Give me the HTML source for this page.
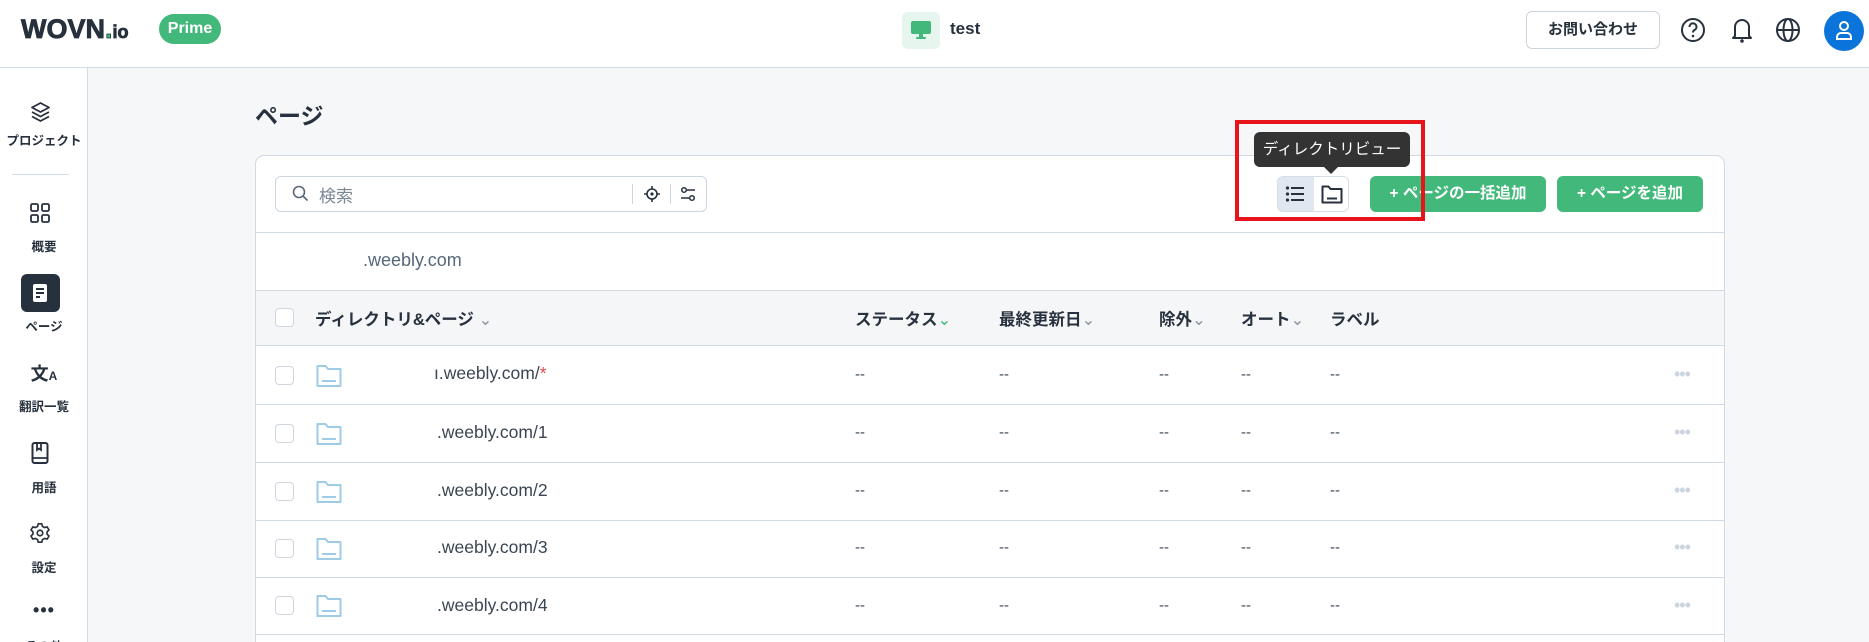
<!DOCTYPE html>
<html style="overflow:hidden;width:1869px;height:642px"><head><meta charset="utf-8"><style>
*{box-sizing:border-box;margin:0;padding:0}
body{width:1869px;height:642px;overflow:hidden;background:#f6f7f9;font-family:"Liberation Sans","Noto Sans CJK JP",sans-serif;color:#27313d;position:relative}
.a{position:absolute}
.hdr{left:0;top:0;width:1869px;height:68px;background:#fff;border-bottom:1px solid #d3dbe5}
.side{left:0;top:68px;width:88px;height:574px;background:#fff;border-right:1px solid #d3dbe5}
.lbl{width:88px;text-align:center;font-size:12.5px;font-weight:bold;color:#27313d}
.card{left:255px;top:155px;width:1470px;height:500px;background:#fff;border:1px solid #d0d9e4;border-radius:9px}
.hl{height:1px;background:#d0d9e4;left:256px;width:1468px}
.cb{width:19px;height:19px;border:1.5px solid #d0d6de;border-radius:4px;background:#fff}
.th{font-size:16.5px;font-weight:bold;color:#27313d;top:306px}
.dd{font-size:15px;color:#3a4654}
.url{font-size:17.5px;color:#3a4654}
.btn{top:176px;height:36px;background:#42b87a;border-radius:6px;color:#fff;font-weight:bold;font-size:15.5px;text-align:center;line-height:36px}
.dots{color:#cdd5de;font-size:18px;letter-spacing:-1px}
</style></head><body>
<div class="a hdr"></div>
<div class="a" style="left:21px;top:14px;font-size:27px;font-weight:bold;letter-spacing:0px;color:#27313d;-webkit-text-stroke:0.8px #27313d">WOVN<span style="color:#42b87a">.</span><span style="font-size:18px">io</span></div>
<div class="a" style="left:159px;top:14px;width:62px;height:30px;border-radius:15px;background:#42b87a;color:#fff;font-weight:bold;font-size:16px;text-align:center;line-height:30px">Prime</div>
<div class="a" style="left:902px;top:12px;width:38px;height:37px;border-radius:6px;background:#e6f5ed"></div>
<svg class="a" style="left:910px;top:20px" width="22" height="20" viewBox="0 0 22 20"><rect x="1" y="1" width="20" height="13" rx="2" fill="#42b87a"/><rect x="9" y="14" width="4" height="3" fill="#42b87a"/><rect x="6" y="17" width="10" height="2" rx="1" fill="#42b87a"/></svg>
<div class="a" style="left:950px;top:19px;font-size:17px;font-weight:bold">test</div>
<div class="a" style="left:1526px;top:11px;width:134px;height:38px;border:1px solid #ccd4de;border-radius:6px;text-align:center;line-height:36px;font-size:15px;font-weight:bold">お問い合わせ</div>
<svg class="a" style="left:1680px;top:17px" width="26" height="26" viewBox="0 0 26 26"><circle cx="13" cy="13" r="11" fill="none" stroke="#27313d" stroke-width="2"/><path d="M9.5 10a3.5 3.5 0 1 1 5 3c-1.2.7-1.5 1.3-1.5 2.5" fill="none" stroke="#27313d" stroke-width="2"/><circle cx="13" cy="19" r="1.3" fill="#27313d"/></svg>
<svg class="a" style="left:1730px;top:16px" width="24" height="28" viewBox="0 0 24 28"><path d="M5 20V11a7 7 0 0 1 14 0v9l2 2H3z" fill="none" stroke="#27313d" stroke-width="2" stroke-linejoin="round"/><circle cx="12" cy="25" r="1.8" fill="#27313d"/></svg>
<svg class="a" style="left:1775px;top:17px" width="26" height="26" viewBox="0 0 26 26"><circle cx="13" cy="13" r="11" fill="none" stroke="#27313d" stroke-width="2"/><ellipse cx="13" cy="13" rx="4.5" ry="11" fill="none" stroke="#27313d" stroke-width="2"/><path d="M2 13h22" stroke="#27313d" stroke-width="2"/></svg>
<div class="a" style="left:1824px;top:11px;width:40px;height:40px;border-radius:50%;background:#0a74da"></div>
<svg class="a" style="left:1834px;top:20px" width="20" height="22" viewBox="0 0 20 22"><circle cx="10" cy="6" r="4" fill="none" stroke="#fff" stroke-width="2"/><path d="M3 19v-2a4 4 0 0 1 4-4h6a4 4 0 0 1 4 4v2z" fill="none" stroke="#fff" stroke-width="2"/></svg>

<div class="a side"></div>
<svg class="a" style="left:30px;top:101px" width="21" height="22" viewBox="0 0 21 22"><path d="M10.5 2L19 6.5 10.5 11 2 6.5z" fill="none" stroke="#27313d" stroke-width="1.8" stroke-linejoin="round"/><path d="M2 11l8.5 4.5L19 11M2 15.5l8.5 4.5 8.5-4.5" fill="none" stroke="#27313d" stroke-width="1.8" stroke-linejoin="round"/></svg>
<div class="a lbl" style="top:130px;left:0">プロジェクト</div>
<div class="a" style="left:12px;top:174px;width:57px;height:1px;background:#d3dbe5"></div>
<svg class="a" style="left:30px;top:203px" width="20" height="20" viewBox="0 0 20 20"><g fill="none" stroke="#27313d" stroke-width="1.8"><rect x="1" y="1" width="7" height="7" rx="1.5"/><rect x="12" y="1" width="7" height="7" rx="1.5"/><rect x="1" y="12" width="7" height="7" rx="1.5"/><rect x="12" y="12" width="7" height="7" rx="1.5"/></g></svg>
<div class="a lbl" style="top:236px;left:0">概要</div>
<div class="a" style="left:21px;top:274px;width:39px;height:38px;border-radius:6px;background:#27313d"></div>
<svg class="a" style="left:32px;top:283px" width="16" height="20" viewBox="0 0 16 20"><rect x="1" y="1" width="14" height="18" rx="2" fill="#fff"/><path d="M4 6h8M4 10h8M4 14h4" stroke="#27313d" stroke-width="2"/></svg>
<div class="a lbl" style="top:316px;left:0">ページ</div>
<div class="a lbl" style="top:360px;left:0;font-size:18px">文<span style="font-size:12px">A</span></div>
<div class="a lbl" style="top:396px;left:0">翻訳一覧</div>
<svg class="a" style="left:31px;top:442px" width="18" height="22" viewBox="0 0 18 22"><rect x="1.5" y="1" width="15" height="20" rx="2" fill="none" stroke="#27313d" stroke-width="2"/><path d="M1.5 16h15M6 1v7l2-1.5 2 1.5V1" fill="none" stroke="#27313d" stroke-width="1.8"/></svg>
<div class="a lbl" style="top:477px;left:0">用語</div>
<svg class="a" style="left:29px;top:522px" width="22" height="22" viewBox="0 0 24 24"><path d="M10 2h4l.7 2.8 2.3 1.3 2.8-.8 2 3.4-2.1 2v2.6l2.1 2-2 3.4-2.8-.8-2.3 1.3L14 22h-4l-.7-2.8-2.3-1.3-2.8.8-2-3.4 2.1-2v-2.6l-2.1-2 2-3.4 2.8.8 2.3-1.3z" fill="none" stroke="#27313d" stroke-width="1.8" stroke-linejoin="round"/><circle cx="12" cy="12" r="3" fill="none" stroke="#27313d" stroke-width="1.8"/></svg>
<div class="a lbl" style="top:557px;left:0">設定</div>
<div class="a lbl" style="top:600px;left:0;font-size:18px;letter-spacing:1px">•••</div>
<div class="a lbl" style="top:636px;left:0">その他</div>

<div class="a" style="left:255px;top:97px;font-size:23px;font-weight:bold">ページ</div>
<div class="a card"></div>
<div class="a" style="left:275px;top:176px;width:432px;height:36px;border:1px solid #ccd5e0;border-radius:6px;background:#fff"></div>
<svg class="a" style="left:292px;top:185px" width="17" height="17" viewBox="0 0 17 17"><circle cx="7" cy="7" r="5.5" fill="none" stroke="#5a6876" stroke-width="1.6"/><path d="M11 11l4.5 4.5" stroke="#5a6876" stroke-width="1.6"/></svg>
<div class="a" style="left:319px;top:182px;font-size:17px;color:#7a8794">検索</div>
<div class="a" style="left:632px;top:184px;width:1px;height:20px;background:#ccd5e0"></div>
<svg class="a" style="left:644px;top:186px" width="16" height="16" viewBox="0 0 16 16"><circle cx="8" cy="8" r="5" fill="none" stroke="#27313d" stroke-width="1.6"/><circle cx="8" cy="8" r="1.6" fill="#27313d"/><path d="M8 0v3M8 13v3M0 8h3M13 8h3" stroke="#27313d" stroke-width="1.6"/></svg>
<div class="a" style="left:670px;top:184px;width:1px;height:20px;background:#ccd5e0"></div>
<svg class="a" style="left:680px;top:186px" width="16" height="16" viewBox="0 0 16 16"><g fill="none" stroke="#27313d" stroke-width="1.5"><path d="M7 4h8M1 12h8"/><circle cx="4" cy="4" r="2.3"/><circle cx="12" cy="12" r="2.3"/></g></svg>

<div class="a" style="left:1277px;top:176px;width:72px;height:36px;border:1px solid #d5dde7;border-radius:6px;background:#e1e7ef;overflow:hidden"><div style="position:absolute;left:36px;top:0;width:36px;height:36px;background:#fff"></div></div>
<svg class="a" style="left:1285px;top:184px" width="20" height="20" viewBox="0 0 20 20"><g fill="#27313d"><circle cx="2.5" cy="4" r="1.6"/><circle cx="2.5" cy="10" r="1.6"/><circle cx="2.5" cy="16" r="1.6"/><rect x="6" y="3" width="13" height="2"/><rect x="6" y="9" width="13" height="2"/><rect x="6" y="15" width="13" height="2"/></g></svg>
<svg class="a" style="left:1321px;top:184px" width="22" height="20" viewBox="0 0 22 20"><path d="M1.5 2.5h6l2 2.5h11v13.5h-19z" fill="none" stroke="#27313d" stroke-width="2" stroke-linejoin="round"/><path d="M6 14.5h10" stroke="#27313d" stroke-width="2"/></svg>
<div class="a" style="left:1254px;top:132px;width:156px;height:35px;background:#333;border-radius:6px;color:#fff;font-size:15.5px;text-align:center;line-height:35px">ディレクトリビュー</div>
<div class="a" style="left:1324px;top:167px;width:0;height:0;border-left:7px solid transparent;border-right:7px solid transparent;border-top:7px solid #333"></div>
<div class="a btn" style="left:1370px;width:176px">+ ページの一括追加</div>
<div class="a btn" style="left:1557px;width:146px">+ ページを追加</div>
<div class="a" style="left:1235px;top:120px;width:190px;height:101px;border:4px solid #e8141c"></div>

<div class="a hl" style="top:232px"></div>
<div class="a" style="left:363px;top:250px;font-size:18px;color:#566879">.weebly.com</div>
<div class="a" style="left:256px;top:290px;width:1468px;height:56px;background:#f5f6f8;border-top:1px solid #d0d9e4;border-bottom:1px solid #d0d9e4"></div>
<div class="a cb" style="left:275px;top:308px"></div>
<div class="a th" style="left:315px">ディレクトリ&amp;ページ <span style="color:#8a96a3;font-weight:normal">⌄</span></div>
<div class="a th" style="left:855px">ステータス<span style="color:#42b87a;font-weight:normal">⌄</span></div>
<div class="a th" style="left:999px">最終更新日<span style="color:#8a96a3;font-weight:normal">⌄</span></div>
<div class="a th" style="left:1159px">除外<span style="color:#8a96a3;font-weight:normal">⌄</span></div>
<div class="a th" style="left:1241px">オート<span style="color:#8a96a3;font-weight:normal">⌄</span></div>
<div class="a th" style="left:1330px">ラベル</div>

<div class="a hl" style="top:404px"></div>
<div class="a hl" style="top:462px"></div>
<div class="a hl" style="top:520px"></div>
<div class="a hl" style="top:577px"></div>
<div class="a hl" style="top:634px"></div>

<div class="a cb" style="left:275px;top:366px"></div><div class="a cb" style="left:275px;top:424px"></div><div class="a cb" style="left:275px;top:482px"></div><div class="a cb" style="left:275px;top:539px"></div><div class="a cb" style="left:275px;top:596px"></div>
<svg class="a" style="left:316px;top:364px" width="26" height="24" viewBox="0 0 26 24"><path d="M1.5 2h8l2.5 3h12.5v17h-23z" fill="none" stroke="#9dcbe8" stroke-width="2" stroke-linejoin="round"/><path d="M6 17h14" stroke="#9dcbe8" stroke-width="2"/></svg>
<svg class="a" style="left:316px;top:422px" width="26" height="24" viewBox="0 0 26 24"><path d="M1.5 2h8l2.5 3h12.5v17h-23z" fill="none" stroke="#9dcbe8" stroke-width="2" stroke-linejoin="round"/><path d="M6 17h14" stroke="#9dcbe8" stroke-width="2"/></svg>
<svg class="a" style="left:316px;top:480px" width="26" height="24" viewBox="0 0 26 24"><path d="M1.5 2h8l2.5 3h12.5v17h-23z" fill="none" stroke="#9dcbe8" stroke-width="2" stroke-linejoin="round"/><path d="M6 17h14" stroke="#9dcbe8" stroke-width="2"/></svg>
<svg class="a" style="left:316px;top:537px" width="26" height="24" viewBox="0 0 26 24"><path d="M1.5 2h8l2.5 3h12.5v17h-23z" fill="none" stroke="#9dcbe8" stroke-width="2" stroke-linejoin="round"/><path d="M6 17h14" stroke="#9dcbe8" stroke-width="2"/></svg>
<svg class="a" style="left:316px;top:594px" width="26" height="24" viewBox="0 0 26 24"><path d="M1.5 2h8l2.5 3h12.5v17h-23z" fill="none" stroke="#9dcbe8" stroke-width="2" stroke-linejoin="round"/><path d="M6 17h14" stroke="#9dcbe8" stroke-width="2"/></svg>
<div class="a url" style="left:434px;top:363px">ı.weebly.com/<span style="color:#e5484d">*</span></div>
<div class="a url" style="left:437px;top:422px">.weebly.com/1</div>
<div class="a url" style="left:437px;top:480px">.weebly.com/2</div>
<div class="a url" style="left:437px;top:537px">.weebly.com/3</div>
<div class="a url" style="left:437px;top:595px">.weebly.com/4</div>

<div class="a dd" style="left:855px;top:366px">--</div><div class="a dd" style="left:999px;top:366px">--</div><div class="a dd" style="left:1159px;top:366px">--</div><div class="a dd" style="left:1241px;top:366px">--</div><div class="a dd" style="left:1330px;top:366px">--</div>
<div class="a dd" style="left:855px;top:424px">--</div><div class="a dd" style="left:999px;top:424px">--</div><div class="a dd" style="left:1159px;top:424px">--</div><div class="a dd" style="left:1241px;top:424px">--</div><div class="a dd" style="left:1330px;top:424px">--</div>
<div class="a dd" style="left:855px;top:482px">--</div><div class="a dd" style="left:999px;top:482px">--</div><div class="a dd" style="left:1159px;top:482px">--</div><div class="a dd" style="left:1241px;top:482px">--</div><div class="a dd" style="left:1330px;top:482px">--</div>
<div class="a dd" style="left:855px;top:539px">--</div><div class="a dd" style="left:999px;top:539px">--</div><div class="a dd" style="left:1159px;top:539px">--</div><div class="a dd" style="left:1241px;top:539px">--</div><div class="a dd" style="left:1330px;top:539px">--</div>
<div class="a dd" style="left:855px;top:597px">--</div><div class="a dd" style="left:999px;top:597px">--</div><div class="a dd" style="left:1159px;top:597px">--</div><div class="a dd" style="left:1241px;top:597px">--</div><div class="a dd" style="left:1330px;top:597px">--</div>

<div class="a dots" style="left:1674px;top:364px">•••</div>
<div class="a dots" style="left:1674px;top:422px">•••</div>
<div class="a dots" style="left:1674px;top:480px">•••</div>
<div class="a dots" style="left:1674px;top:537px">•••</div>
<div class="a dots" style="left:1674px;top:595px">•••</div>
</body></html>
